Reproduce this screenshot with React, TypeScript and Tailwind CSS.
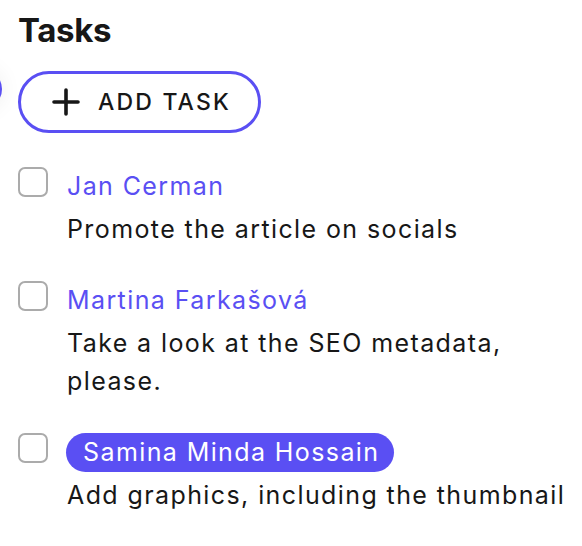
import React from 'react'

type Task = {
  id: number
  assignee: string
  text: string
  highlighted?: boolean
}

const tasks: Task[] = [
  { id: 1, assignee: 'Jan Cerman', text: 'Promote the article on socials' },
  { id: 2, assignee: 'Martina Farkašová', text: 'Take a look at the SEO metadata, please.' },
  { id: 3, assignee: 'Samina Minda Hossain', text: 'Add graphics, including the thumbnail', highlighted: true },
]

function PlusIcon() {
  return (
    <svg width="28" height="28" viewBox="0 0 28 28" fill="none" stroke="currentColor" strokeWidth={3.6} strokeLinecap="round">
      <path d="M14 2v24M2 14h24" />
    </svg>
  )
}

export default function App() {
  return (
    <div className="relative w-[582px] h-[546px] overflow-hidden bg-white pl-[18px] pt-[10px] text-[#171717] font-['Inter',sans-serif]">
      {/* clipped focus bubble at left edge */}
      <div className="absolute left-[-38px] top-[69px] w-[40px] h-[40px] rounded-full border-[3px] border-[#5a4ff3] bg-white shadow-[0_0_22px_rgba(0,0,0,0.07)]" />

      <h2 className="text-[33px] leading-[40px] font-bold tracking-[-0.01em]">Tasks</h2>

      <button className="mt-[21px] h-[62px] w-[243px] flex items-center gap-[18px] pl-[31px] rounded-full border-[3px] border-[#5a4ff3] bg-white text-[#171717]">
        <PlusIcon />
        <span className="text-[23px] font-medium tracking-[0.095em] leading-none">ADD TASK</span>
      </button>

      <ul className="mt-[34px] flex flex-col gap-[33px]">
        {tasks.map(t => (
          <li key={t.id} className="flex gap-[19px]">
            <span className="shrink-0 w-[30px] h-[30px] rounded-[7px] border-2 border-[#ababab] bg-white" />
            <div className="flex flex-col gap-[4px] text-[25px] tracking-[1.4px]">
              <div className="h-[39px] flex items-center">
                {t.highlighted ? (
                  <span className="h-[39px] flex items-center pl-[17px] pr-[15px] -ml-px rounded-full bg-[#5a4ff3] text-white leading-none">
                    {t.assignee}
                  </span>
                ) : (
                  <span className="text-[#5a4ff3] leading-[39px]">{t.assignee}</span>
                )}
              </div>
              <p className="leading-[38px] text-[#171717]">{t.text}</p>
            </div>
          </li>
        ))}
      </ul>
    </div>
  )
}
